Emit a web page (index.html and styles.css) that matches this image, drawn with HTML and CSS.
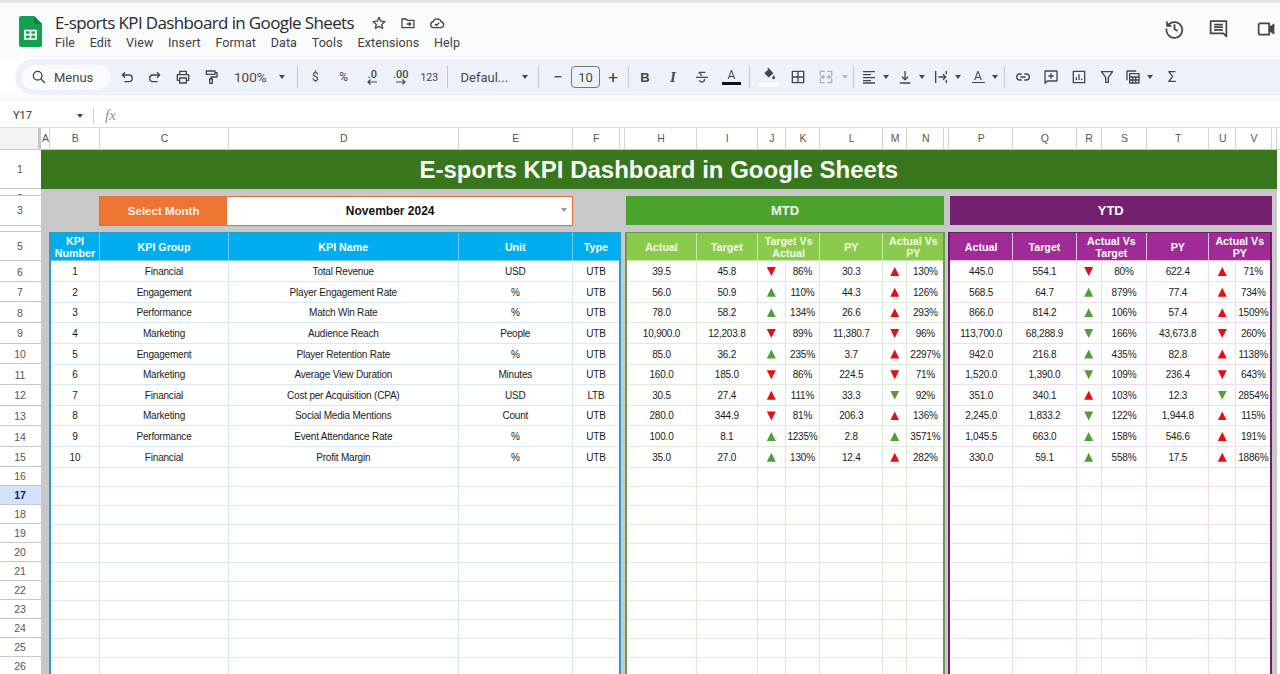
FILE: index.html
```html
<!DOCTYPE html>
<html lang="en">
<head>
<meta charset="utf-8">
<title>E-sports KPI Dashboard in Google Sheets</title>
<link rel="stylesheet" href="styles.css">
</head>
<body>
<header class="appbar">
  <svg class="logo" viewBox="0 0 23 31"><path fill="#12a150" d="M2 0h13l8 8v21a2 2 0 0 1-2 2H2a2 2 0 0 1-2-2V2a2 2 0 0 1 2-2z"/><path fill="#0b8043" d="M15 0l8 8h-6a2 2 0 0 1-2-2z"/><path fill="none" stroke="#fff" stroke-width="1.7" d="M6 14.5h11v8.500H6zM6 18.700h11M11.500 14.500v8.500"/></svg>
  <div class="titles">
    <div class="docline">
      <span class="docname">E-sports KPI Dashboard in Google Sheets</span>
      <svg class="dicon" viewBox="0 0 24 24"><path class="s" d="M12 3.500l2.600 5.800 6.300.6-4.800 4.200 1.400 6.200L12 17l-5.500 3.300 1.400-6.200-4.800-4.200 6.300-.6z"/></svg>
      <svg class="dicon" viewBox="0 0 24 24"><path class="s" d="M3 6h6l2 2h10v11H3zM10 13.500h6M13.500 11l2.500 2.500-2.500 2.500"/></svg>
      <svg class="dicon" viewBox="0 0 24 24"><path class="s" d="M7 19a4.500 4.500 0 0 1-.8-8.900A6.500 6.500 0 0 1 18.500 10.500 4.300 4.300 0 0 1 18 19zM9 13.500l2.200 2.200 4-4"/></svg>
    </div>
    <nav class="menu"><span>File</span><span>Edit</span><span>View</span><span>Insert</span><span>Format</span><span>Data</span><span>Tools</span><span>Extensions</span><span>Help</span></nav>
  </div>
  <div class="actions">
    <span class="act"><svg viewBox="0 0 24 24"><path class="s" d="M4.500 8.500A9 9 0 1 1 3 12M3.500 4v5h5M12 7v5.500l3.500 2.500"/></svg></span>
    <span class="act"><svg viewBox="0 0 24 24"><path class="s" d="M3 3.500h18v17.500l-3.500-3.500H3zM7 7.500h10M7 10.500h10M7 13.500h10"/></svg></span>
    <span class="act far"><svg viewBox="0 0 24 24"><path class="s" d="M3 8a2 2 0 0 1 2-2h10v13H5a2 2 0 0 1-2-2z"/><path class="f" d="M15 10l6-4v13l-6-4z"/></svg></span>
  </div>
</header>

<div class="toolbar">
  <div class="search"><svg class="ic" viewBox="0 0 24 24"><path class="s" d="M10 3.500a6.500 6.500 0 1 0 0 13 6.500 6.500 0 0 0 0-13zM15 15l6 6"/></svg><span>Menus</span></div>
  <span class="t"><svg class="ic" viewBox="0 0 24 24"><path class="s" d="M9 5L5 9l4 4M5 9h10a5 5 0 0 1 0 10H8"/></svg></span>
  <span class="t"><svg class="ic" viewBox="0 0 24 24"><path class="s" d="M15 5l4 4-4 4M19 9H9a5 5 0 0 0 0 10h7"/></svg></span>
  <span class="t"><svg class="ic" viewBox="0 0 24 24"><path class="s" d="M7 8V3.500h10V8M7 17H3.500V8.500h17V17H17M7 13.500h10V21H7z"/></svg></span>
  <span class="t"><svg class="ic" viewBox="0 0 24 24"><path class="s" d="M5 3h13v5H5zM18 5.500h3V12h-9v3M10 15h4v6.500h-4z"/></svg></span>
  <span class="t zoom"><b>100%</b><i class="caret"></i></span>
  <span class="sep"></span>
  <span class="t n">$</span><span class="t n">%</span>
  <span class="t n stack">.0<svg viewBox="0 0 12 6"><path class="s2" d="M11 3H2M4.500 .5L2 3l2.500 2.500"/></svg></span>
  <span class="t n stack">.00<svg viewBox="0 0 12 6"><path class="s2" d="M1 3h9M7.500 .5L10 3 7.500 5.500"/></svg></span>
  <span class="t n num">123</span>
  <span class="sep"></span>
  <span class="t font"><b>Defaul...</b><i class="caret"></i></span>
  <span class="sep"></span>
  <span class="t pm first">−</span><span class="size">10</span><span class="t pm">+</span>
  <span class="sep tight"></span>
  <span class="t bold">B</span>
  <span class="t ital">I</span>
  <span class="t strike"><svg class="ic" viewBox="0 0 24 24"><path class="s" d="M7 5h10M8 5c0 3 2 4 4 5M3 12.500h18M15.500 15c.8 2.500-1 4.500-3.500 4.500-2 0-3.500-1-4-2.500"/></svg></span>
  <span class="t color">A<i class="bar"></i></span>
  <span class="sep"></span>
  <span class="t fill"><svg class="ic" viewBox="0 0 24 24"><path class="f" d="M9 2l1.500-1 9 9.500-8 7.500-7.500-7.500 7-6.500z"/><path class="f" d="M20 14c1.500 2 2.500 3.200 2.500 4.500a2.500 2.500 0 0 1-5 0c0-1.300 1-2.500 2.500-4.500z"/></svg><i class="bar white"></i></span>
  <span class="t"><svg class="ic" viewBox="0 0 24 24"><path class="s" d="M3.500 3.500h17v17h-17zM12 3.500v17M3.500 12h17"/></svg></span>
  <span class="t off"><svg class="ic" viewBox="0 0 24 24"><path class="s" d="M3.500 10V3.500H10M14 3.500h6.500V10M3.500 14v6.500H10M14 20.500h6.500V14M3.500 12h6M7 9.500L9.500 12 7 14.500M20.500 12h-6M17 9.500L14.500 12l2.500 2.500"/></svg></span>
  <i class="car dim"></i>
  <span class="sep"></span>
  <span class="t w24"><svg class="ic" viewBox="0 0 24 24"><path class="s" d="M3 4h18M3 8.500h12M3 13h18M3 17.500h12M3 21h18"/></svg></span><i class="car"></i>
  <span class="t w24 m2"><svg class="ic" viewBox="0 0 24 24"><path class="s" d="M12 3v13M7.500 11.500L12 16l4.500-4.500M4 21h16"/></svg></span><i class="car"></i>
  <span class="t w24 m2"><svg class="ic" viewBox="0 0 24 24"><path class="s" d="M4 3v18M20 3v5M20 16v5M8 12h11M15 8l4 4-4 4"/></svg></span><i class="car"></i>
  <span class="t w24 m3 rot">A<i class="under"></i></span><i class="car"></i>
  <span class="sep wide"></span>
  <span class="t"><svg class="ic" viewBox="0 0 24 24"><path class="s" d="M10 7.500H7a4.500 4.500 0 0 0 0 9h3M14 7.500h3a4.500 4.500 0 0 1 0 9h-3M8 12h8"/></svg></span>
  <span class="t"><svg class="ic" viewBox="0 0 24 24"><path class="s" d="M3 3h18v15H6.500L3 21.500zM12 6.500v8M8 10.500h8"/></svg></span>
  <span class="t"><svg class="ic" viewBox="0 0 24 24"><path class="s" d="M3.500 3.500h17v17h-17zM8 16.500v-4M12 16.500V8M16 16.500v-2"/></svg></span>
  <span class="t"><svg class="ic" viewBox="0 0 24 24"><path class="s" d="M3.500 4h17L14 12.500V20h-4v-7.500z"/></svg></span>
  <span class="t w24"><svg class="ic" viewBox="0 0 24 24"><path class="s" d="M3 17V3h14"/><path class="s" d="M7 7h14v14H7zM7 12h14M11.500 12v9M16 12v9M7 16.500h14"/></svg></span><i class="car"></i>
  <span class="t sigma">Σ</span>
</div>

<div class="formula"><span class="ref">Y17</span><i class="caret"></i><span class="fsep"></span><span class="fx">fx</span></div>

<div class="colheads">
  <span class="corner"></span><span class="ca">A</span><span class="cb">B</span><span class="cc">C</span><span class="cd">D</span><span class="ce">E</span><span class="cf">F</span><span class="cg"></span><span class="ch">H</span><span class="ci">I</span><span class="cj">J</span><span class="ck">K</span><span class="cl">L</span><span class="cm">M</span><span class="cn">N</span><span class="co"></span><span class="cp">P</span><span class="cq">Q</span><span class="cr">R</span><span class="cs">S</span><span class="ct">T</span><span class="cu">U</span><span class="cv">V</span><span class="cw"></span>
</div>

<div class="sheet">
  <div class="rowheads">
    <span class="r1">1</span><span class="r2 tiny">2</span><span class="r3">3</span><span class="r4 tiny">4</span><span class="r5">5</span>
    <span class="rd">6</span><span class="rd">7</span><span class="rd">8</span><span class="rd">9</span><span class="rd">10</span><span class="rd">11</span><span class="rd">12</span><span class="rd">13</span><span class="rd">14</span><span class="rd">15</span>
    <span class="re">16</span><span class="re sel">17</span><span class="re">18</span><span class="re">19</span><span class="re">20</span><span class="re">21</span><span class="re">22</span><span class="re">23</span><span class="re">24</span><span class="re">25</span><span class="re">26</span>
  </div>
  <div class="main">
    <h1 class="banner">E-sports KPI Dashboard in Google Sheets</h1>
    <div class="controls">
      <div class="picker"><span class="plabel">Select Month</span><span class="pvalue">November 2024</span><i class="pcaret"></i></div>
      <div class="bar-mtd">MTD</div>
      <div class="bar-ytd">YTD</div>
    </div>
    <div class="panels">
      <section class="panel kpi">
        <div class="row head"><span>KPI<br>Number</span><span>KPI Group</span><span>KPI Name</span><span>Unit</span><span>Type</span></div>
        <div class="row"><span>1</span><span>Financial</span><span>Total Revenue</span><span>USD</span><span>UTB</span></div>
        <div class="row"><span>2</span><span>Engagement</span><span>Player Engagement Rate</span><span>%</span><span>UTB</span></div>
        <div class="row"><span>3</span><span>Performance</span><span>Match Win Rate</span><span>%</span><span>UTB</span></div>
        <div class="row"><span>4</span><span>Marketing</span><span>Audience Reach</span><span>People</span><span>UTB</span></div>
        <div class="row"><span>5</span><span>Engagement</span><span>Player Retention Rate</span><span>%</span><span>UTB</span></div>
        <div class="row"><span>6</span><span>Marketing</span><span>Average View Duration</span><span>Minutes</span><span>UTB</span></div>
        <div class="row"><span>7</span><span>Financial</span><span>Cost per Acquisition (CPA)</span><span>USD</span><span>LTB</span></div>
        <div class="row"><span>8</span><span>Marketing</span><span>Social Media Mentions</span><span>Count</span><span>UTB</span></div>
        <div class="row"><span>9</span><span>Performance</span><span>Event Attendance Rate</span><span>%</span><span>UTB</span></div>
        <div class="row"><span>10</span><span>Financial</span><span>Profit Margin</span><span>%</span><span>UTB</span></div>
        <div class="row blank"><span></span><span></span><span></span><span></span><span></span></div>
        <div class="row blank"><span></span><span></span><span></span><span></span><span></span></div>
        <div class="row blank"><span></span><span></span><span></span><span></span><span></span></div>
        <div class="row blank"><span></span><span></span><span></span><span></span><span></span></div>
        <div class="row blank"><span></span><span></span><span></span><span></span><span></span></div>
        <div class="row blank"><span></span><span></span><span></span><span></span><span></span></div>
        <div class="row blank"><span></span><span></span><span></span><span></span><span></span></div>
        <div class="row blank"><span></span><span></span><span></span><span></span><span></span></div>
        <div class="row blank"><span></span><span></span><span></span><span></span><span></span></div>
        <div class="row blank"><span></span><span></span><span></span><span></span><span></span></div>
        <div class="row blank"><span></span><span></span><span></span><span></span><span></span></div>
      </section>
      <section class="panel mtd">
        <div class="row head"><span>Actual</span><span>Target</span><span class="two">Target Vs<br>Actual</span><span>PY</span><span class="two">Actual Vs<br>PY</span></div>
        <div class="row"><span>39.5</span><span>45.8</span><span><i class="dn red"></i></span><span>86%</span><span>30.3</span><span><i class="up red"></i></span><span>130%</span></div>
        <div class="row"><span>56.0</span><span>50.9</span><span><i class="up grn"></i></span><span>110%</span><span>44.3</span><span><i class="up red"></i></span><span>126%</span></div>
        <div class="row"><span>78.0</span><span>58.2</span><span><i class="up grn"></i></span><span>134%</span><span>26.6</span><span><i class="up red"></i></span><span>293%</span></div>
        <div class="row"><span>10,900.0</span><span>12,203.8</span><span><i class="dn red"></i></span><span>89%</span><span>11,380.7</span><span><i class="dn red"></i></span><span>96%</span></div>
        <div class="row"><span>85.0</span><span>36.2</span><span><i class="up grn"></i></span><span>235%</span><span>3.7</span><span><i class="up red"></i></span><span>2297%</span></div>
        <div class="row"><span>160.0</span><span>185.0</span><span><i class="dn red"></i></span><span>86%</span><span>224.5</span><span><i class="dn red"></i></span><span>71%</span></div>
        <div class="row"><span>30.5</span><span>27.4</span><span><i class="up red"></i></span><span>111%</span><span>33.3</span><span><i class="dn grn"></i></span><span>92%</span></div>
        <div class="row"><span>280.0</span><span>344.9</span><span><i class="dn red"></i></span><span>81%</span><span>206.3</span><span><i class="up red"></i></span><span>136%</span></div>
        <div class="row"><span>100.0</span><span>8.1</span><span><i class="up grn"></i></span><span>1235%</span><span>2.8</span><span><i class="up grn"></i></span><span>3571%</span></div>
        <div class="row"><span>35.0</span><span>27.0</span><span><i class="up grn"></i></span><span>130%</span><span>12.4</span><span><i class="up red"></i></span><span>282%</span></div>
        <div class="row blank"><span></span><span></span><span></span><span></span><span></span><span></span><span></span></div>
        <div class="row blank"><span></span><span></span><span></span><span></span><span></span><span></span><span></span></div>
        <div class="row blank"><span></span><span></span><span></span><span></span><span></span><span></span><span></span></div>
        <div class="row blank"><span></span><span></span><span></span><span></span><span></span><span></span><span></span></div>
        <div class="row blank"><span></span><span></span><span></span><span></span><span></span><span></span><span></span></div>
        <div class="row blank"><span></span><span></span><span></span><span></span><span></span><span></span><span></span></div>
        <div class="row blank"><span></span><span></span><span></span><span></span><span></span><span></span><span></span></div>
        <div class="row blank"><span></span><span></span><span></span><span></span><span></span><span></span><span></span></div>
        <div class="row blank"><span></span><span></span><span></span><span></span><span></span><span></span><span></span></div>
        <div class="row blank"><span></span><span></span><span></span><span></span><span></span><span></span><span></span></div>
        <div class="row blank"><span></span><span></span><span></span><span></span><span></span><span></span><span></span></div>
      </section>
      <section class="panel ytd">
        <div class="row head"><span>Actual</span><span>Target</span><span class="two">Actual Vs<br>Target</span><span>PY</span><span class="two">Actual Vs<br>PY</span></div>
        <div class="row"><span>445.0</span><span>554.1</span><span><i class="dn red"></i></span><span>80%</span><span>622.4</span><span><i class="up red"></i></span><span>71%</span></div>
        <div class="row"><span>568.5</span><span>64.7</span><span><i class="up grn"></i></span><span>879%</span><span>77.4</span><span><i class="up red"></i></span><span>734%</span></div>
        <div class="row"><span>866.0</span><span>814.2</span><span><i class="up grn"></i></span><span>106%</span><span>57.4</span><span><i class="up red"></i></span><span>1509%</span></div>
        <div class="row"><span>113,700.0</span><span>68,288.9</span><span><i class="dn grn"></i></span><span>166%</span><span>43,673.8</span><span><i class="dn red"></i></span><span>260%</span></div>
        <div class="row"><span>942.0</span><span>216.8</span><span><i class="up grn"></i></span><span>435%</span><span>82.8</span><span><i class="up red"></i></span><span>1138%</span></div>
        <div class="row"><span>1,520.0</span><span>1,390.0</span><span><i class="dn grn"></i></span><span>109%</span><span>236.4</span><span><i class="dn red"></i></span><span>643%</span></div>
        <div class="row"><span>351.0</span><span>340.1</span><span><i class="up red"></i></span><span>103%</span><span>12.3</span><span><i class="dn grn"></i></span><span>2854%</span></div>
        <div class="row"><span>2,245.0</span><span>1,833.2</span><span><i class="dn grn"></i></span><span>122%</span><span>1,944.8</span><span><i class="up red"></i></span><span>115%</span></div>
        <div class="row"><span>1,045.5</span><span>663.0</span><span><i class="up grn"></i></span><span>158%</span><span>546.6</span><span><i class="up red"></i></span><span>191%</span></div>
        <div class="row"><span>330.0</span><span>59.1</span><span><i class="up grn"></i></span><span>558%</span><span>17.5</span><span><i class="up red"></i></span><span>1886%</span></div>
        <div class="row blank"><span></span><span></span><span></span><span></span><span></span><span></span><span></span></div>
        <div class="row blank"><span></span><span></span><span></span><span></span><span></span><span></span><span></span></div>
        <div class="row blank"><span></span><span></span><span></span><span></span><span></span><span></span><span></span></div>
        <div class="row blank"><span></span><span></span><span></span><span></span><span></span><span></span><span></span></div>
        <div class="row blank"><span></span><span></span><span></span><span></span><span></span><span></span><span></span></div>
        <div class="row blank"><span></span><span></span><span></span><span></span><span></span><span></span><span></span></div>
        <div class="row blank"><span></span><span></span><span></span><span></span><span></span><span></span><span></span></div>
        <div class="row blank"><span></span><span></span><span></span><span></span><span></span><span></span><span></span></div>
        <div class="row blank"><span></span><span></span><span></span><span></span><span></span><span></span><span></span></div>
        <div class="row blank"><span></span><span></span><span></span><span></span><span></span><span></span><span></span></div>
        <div class="row blank"><span></span><span></span><span></span><span></span><span></span><span></span><span></span></div>
      </section>
    </div>
  </div>
</div>
</body>
</html>
```

FILE: styles.css
```css
* { box-sizing: border-box; }
html, body { margin: 0; height: 674px; overflow: hidden; }
body { background: #fff; font-family: "Liberation Sans", Arial, sans-serif; color: #222; }
i { font-style: normal; display: block; }
svg { display: block; }
.s { fill: none; stroke: #444746; stroke-width: 2; stroke-linejoin: round; }
.f { fill: #444746; }
.s2 { fill: none; stroke: #444746; stroke-width: 1.2; }

/* app bar */
.appbar { height: 59px; border-top: 3px solid #e3e5e8; background: #f9fbfd; display: flex; align-items: flex-start; padding-left: 19px; }
.logo { width: 23px; height: 31px; margin-top: 13px; flex: none; }
.titles { margin-left: 13px; margin-top: 8px; }
.docline { display: flex; align-items: center; height: 23px; }
.docname { font: 400 17px "Open Sans", sans-serif; color: #2a2a2a; width: 299px; white-space: nowrap; letter-spacing: -.63px; }
.dicon { width: 16px; height: 16px; margin-left: 13px; flex: none; }
.docname + .dicon { margin-left: 17px; }
.menu { display: flex; height: 21px; align-items: center; font: 400 12.500px Roboto, sans-serif; color: #3c4043; gap: 14.700px; margin-top: -2.500px; letter-spacing: .1px; }
.actions { margin-left: auto; display: flex; margin-top: 14px; margin-right: -8px; }
.act { width: 44px; height: 22px; display: flex; align-items: center; justify-content: center; }
.act svg { width: 21px; height: 21px; }
.act.far { margin-left: 4px; }

/* toolbar */
.toolbar { height: 36px; margin-left: 15px; background: #edf2fa; border-radius: 18px 0 0 18px; display: flex; align-items: center; padding-left: 7px; color: #444746; font: 400 12.500px Roboto, sans-serif; white-space: nowrap; }
.search { width: 89px; height: 25px; margin-right: 2px; background: #f9fbfd; border-radius: 13px; display: flex; align-items: center; padding-left: 9px; gap: 7px; font-size: 13px; }
.ic { width: 16px; height: 16px; }
.t { width: 28px; height: 24px; display: flex; align-items: center; justify-content: center; flex: none; position: relative; }
.t b { font-weight: 400; }
.zoom { width: 69px; justify-content: flex-start; padding-left: 9px; font-size: 13.500px; gap: 12px; }
.n { width: 28.500px; font-size: 12px; }
.num { font-size: 10.500px; }
.stack { flex-direction: column; font-size: 11px; line-height: 9px; font-weight: 500; }
.stack svg { width: 12px; height: 6px; }
.font { width: 84.500px; justify-content: flex-start; padding-left: 10px; font-size: 13px; gap: 14px; }
.caret { width: 0; height: 0; border: 3.500px solid transparent; border-top: 4px solid #444746; border-bottom: 0; }
.sep { width: 1px; height: 22px; margin: 0 3px; background: #c7c9cc; flex: none; }
.sep.tight { margin: 0 2px; }
.sep.wide { margin: 0 4px; }
.pm { font-size: 17px; width: 29px; }
.pm.first { width: 26px; margin-left: 3px; }
.pm.first + .size + .pm { width: 26px; }
.size { width: 29px; height: 22px; border: 1px solid #747775; border-radius: 4px; font-size: 13px; display: flex; align-items: center; justify-content: center; flex: none; }
.bold { font: 700 13px "Liberation Sans", sans-serif; }
.ital { font: italic 700 15px "Liberation Serif", serif; }
.strike { width: 29px; }
.color { width: 30px; font-size: 12px; flex-direction: column; line-height: 12px; padding-left: 1px; }
.bar { width: 19px; height: 3.500px; background: #111; margin-top: 1px; }
.bar.white { background: #fff; width: 20px; height: 4px; margin-top: 2px; }
.fill { width: 31px; flex-direction: column; }
.fill .ic { width: 14px; height: 14px; }
.off .s { stroke: #aeb0b2; }
.w24 { width: 24px; }
.m2 { margin-left: 2px; }
.m3 { margin-left: 3px; }
.car { width: 10px; height: 4px; flex: none; position: relative; }
.car::after { content: ""; position: absolute; left: 1.500px; top: 0; border: 3.500px solid transparent; border-top: 4px solid #444746; border-bottom: 0; }
.car.dim::after { border-top-color: #b5b7b9; }
.rot { flex-direction: column; font-size: 12px; line-height: 11px; }
.under { width: 13px; height: 1.500px; background: #444746; }
.sigma { margin-left: 3px; font-size: 15px; }

/* formula bar */
.formula { height: 33px; padding: 2px 0 0 13px; border-top: 7px solid #f9fbfd; border-bottom: 1.500px solid #dadce0; display: flex; align-items: center; background: #fff; font: 400 11px Roboto, sans-serif; color: #333; }
.ref { width: 64px; }
.fsep { width: 1px; height: 16px; background: #d0d2d4; margin-left: 10px; }
.fx { font: italic 400 15px "Liberation Serif", serif; color: #8f9193; margin-left: 11px; }

/* column headers */
.colheads { display: flex; height: 21.500px; background: #fff; border-bottom: 1px solid #c7c7c7; font: 400 10.500px "Liberation Sans", sans-serif; color: #555; }
.colheads span { display: flex; align-items: center; justify-content: center; border-right: 1px solid #d4d4d4; flex: none; padding-left: 1px; }
.corner { width: 41px; background: #f1f3f4; border-right: 3px solid #c7c7c7 !important; }
.ca { width: 9px; } .cb { width: 50.400px; } .cc { width: 128.200px; } .cd { width: 230.400px; } .ce { width: 113.600px; } .cf { width: 47.400px; } .cg { width: 5.300px; }
.ch { width: 71.400px; } .ci { width: 61.300px; } .cj { width: 27.700px; } .ck { width: 34.600px; } .cl { width: 63px; } .cm { width: 24px; } .cn { width: 37px; } .co { width: 5px; }
.cp { width: 64px; } .cq { width: 63.400px; } .cr { width: 25px; } .cs { width: 45.600px; } .ct { width: 62px; } .cu { width: 27px; } .cv { width: 35.400px; } .cw { width: 5px; }

/* row headers */
.sheet { display: flex; align-items: flex-start; }
.rowheads { width: 41px; flex: none; display: flex; flex-direction: column; font-size: 10.500px; color: #555; }
.rowheads span { display: flex; align-items: center; justify-content: center; border-bottom: 1px solid #c7c7c7; overflow: hidden; padding-right: 1px; }
.r1 { height: 39.400px; } .r2 { height: 7px; } .r3 { height: 30px; } .r4 { height: 6px; } .r5 { height: 29.300px; }
.rowheads .rd { height: 20.630px; padding-top: 1px; } .re { height: 19px; }
.tiny { align-items: flex-start !important; padding-top: 3px; line-height: 12px; }
.sel { background: #d3e3fd; font-weight: 700; color: #0b2a55; }

/* main */
.main { width: 1235.700px; background: #c8c8c8; height: 530px; flex: none; }
.banner { margin: 0; height: 39.400px; background: #38761d; color: #fbfdf8; font: 700 24px/40px "Liberation Sans", sans-serif; text-align: center; }
.controls { height: 43px; display: flex; align-items: flex-start; padding-top: 7px; }
.picker { width: 474px; height: 30px; margin-left: 58px; border: 1.700px solid #e2703a; background: #fff; display: flex; align-items: center; position: relative; }
.plabel { width: 127.300px; height: 100%; background: #ed7432; color: #fdf3ea; font: 700 11.500px "Liberation Sans", sans-serif; display: flex; align-items: center; justify-content: center; }
.pvalue { flex: 1; text-align: center; font: 700 12px "Liberation Sans", sans-serif; color: #111; padding-right: 19px; }
.pcaret { position: absolute; right: 5px; top: 11.500px; border: 3.500px solid transparent; border-top: 4px solid #9a9a9a; border-bottom: 0; }
.bar-mtd, .bar-ytd { height: 29px; margin-top: .5px; color: #f3f8ef; font: 700 13px "Liberation Sans", sans-serif; display: flex; align-items: center; justify-content: center; }
.bar-mtd { width: 318px; margin-left: 53px; background: #49a32d; }
.bar-ytd { width: 321.500px; margin-left: 6px; background: #741f6f; }

.panels { display: flex; padding-left: 7.500px; align-items: flex-start; }
.panel { border: solid 2px; border-top-width: 1px; background: #fff; flex: none; }
.kpi { width: 572.800px; border-color: #2e9dc4; }
.mtd { width: 320.200px; margin-left: 4px; border-color: #6a9b54; }
.ytd { width: 324.300px; margin-left: 2.500px; border-color: #741b6e; }

.row { display: grid; height: 20.630px; font-size: 10px; letter-spacing: -.2px; color: #1a1a1a; }
.row > span { display: flex; align-items: center; justify-content: center; border-right: 1px solid; border-bottom: 1px solid; white-space: nowrap; min-width: 0; padding-top: .6px; }
.row > span:last-child { border-right: 0; }
.row.blank { height: 19px; }
.kpi .row { grid-template-columns: 49.900px 128.200px 230.400px 113.600px 46.700px; }
.mtd .row { grid-template-columns: 69.400px 61.300px 27.700px 34.600px 63px 24px 36.200px; }
.ytd .row { grid-template-columns: 63.300px 63.400px 25px 45.600px 62px 27px 34px; }
.kpi .row > span { border-color: #d5ebf4; }
.mtd .row > span { border-color: #dcecd5; }
.ytd .row > span { border-color: #efdcf1; }

.row.head { height: 28.500px; color: #fff; font: 700 10.700px/12px "Liberation Sans", sans-serif; letter-spacing: 0; text-align: center; }
.row.head > span { padding-top: 0; }
.mtd .row.head { grid-template-columns: 69.400px 61.300px 62.300px 63px 60.200px; }
.ytd .row.head { grid-template-columns: 63.300px 63.400px 70.600px 62px 61px; }
.kpi .row.head { background: #00aeef; }
.mtd .row.head { background: #8acb4d; color: #f3faea; }
.ytd .row.head { background: #a02a96; }
.kpi .row.head > span { border-color: #6fcdf3; }
.mtd .row.head > span { border-color: #c9e6ab; }
.ytd .row.head > span { border-color: #e8c0e4; }

.up, .dn { width: 9px; height: 9px; }
.up { clip-path: polygon(50% 0, 100% 100%, 0 100%); }
.dn { clip-path: polygon(0 0, 100% 0, 50% 100%); }
.red { background: #e60e12; }
.grn { background: #4d9f38; }
.dn.grn { background: #5c9a3e; }
```
